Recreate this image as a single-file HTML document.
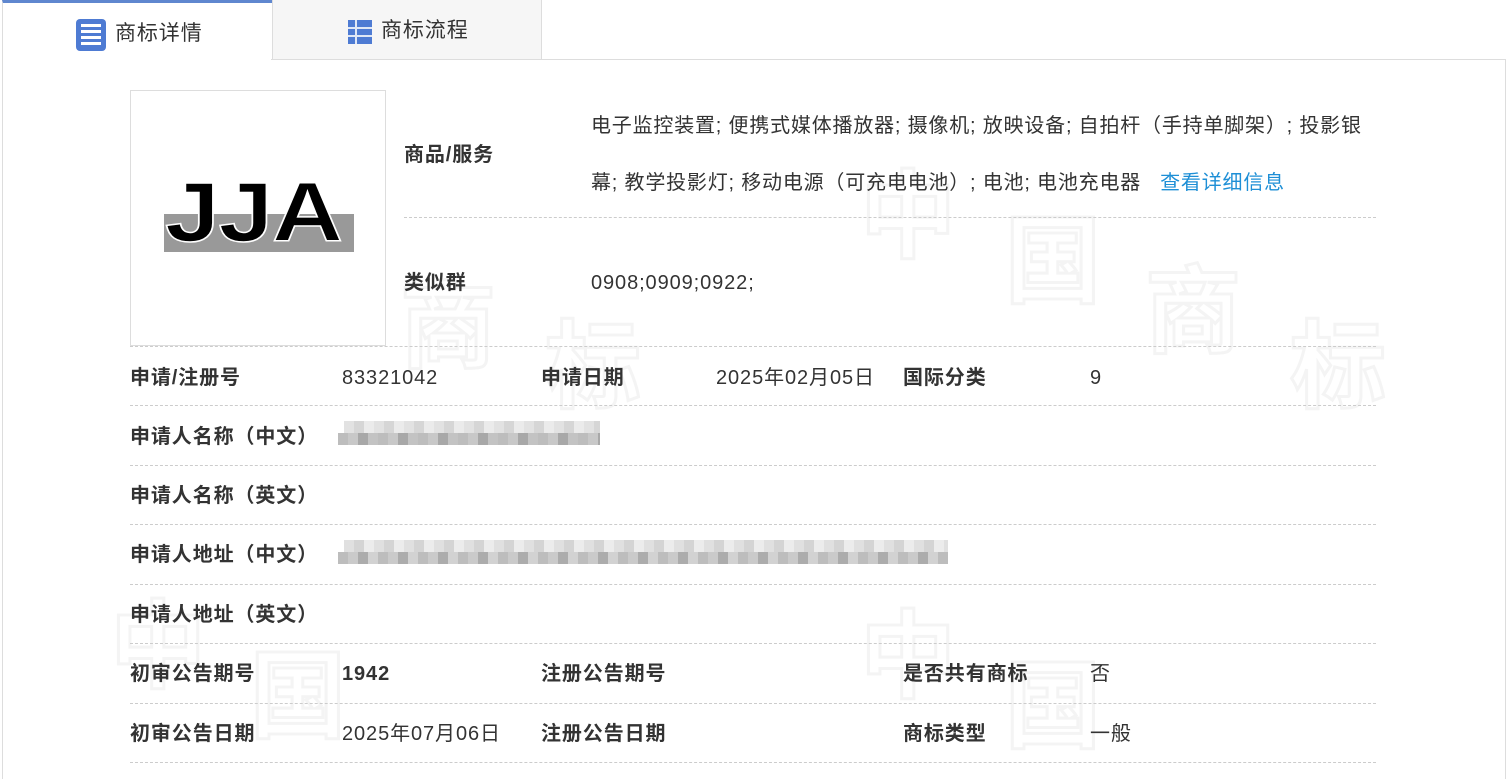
<!DOCTYPE html>
<html><head><meta charset="utf-8"><style>
*{margin:0;padding:0;box-sizing:border-box}
body{width:1510px;height:766px;background:#fff;font-family:"Liberation Sans","Noto Sans CJK SC",sans-serif;color:#333;position:relative;overflow:hidden}
.a{position:absolute;white-space:nowrap;font-size:20px;line-height:24px;letter-spacing:0.9px}
.b{font-weight:bold}
.hl{position:absolute;height:0;border-top:1px dashed #ccc}
.wm{position:absolute;font-size:96px;color:transparent;-webkit-text-stroke:3px #f4f4f4;font-weight:bold;line-height:1}
.blur{position:absolute;height:12px}
</style></head><body>
<div class="wm" style="left:860px;top:170px">中</div>
<div class="wm" style="left:1005px;top:215px">国</div>
<div class="wm" style="left:1145px;top:265px">商</div>
<div class="wm" style="left:1290px;top:320px">标</div>
<div class="wm" style="left:400px;top:280px">商</div>
<div class="wm" style="left:545px;top:320px">标</div>
<div class="wm" style="left:860px;top:610px">中</div>
<div class="wm" style="left:1005px;top:660px">国</div>
<div class="wm" style="left:110px;top:600px">中</div>
<div class="wm" style="left:250px;top:650px">国</div>

<div style="position:absolute;left:2px;top:0;width:270px;height:60px;background:#fff;border-top:3px solid #5f87cf;border-left:1px solid #ddd"></div>
<div style="position:absolute;left:272px;top:0;width:270px;height:59px;background:#f6f6f6;border-left:1px solid #ddd;border-right:1px solid #ddd"></div>
<div style="position:absolute;left:2px;top:59px;width:1504px;height:720px;border:1px solid #ddd;border-bottom:none"></div>
<div style="position:absolute;left:3px;top:58px;width:268px;height:3px;background:#fff"></div>
<svg style="position:absolute;left:76px;top:19px" width="30" height="32" viewBox="0 0 30 32"><rect x="0" y="0" width="30" height="32" rx="4" fill="#4e7bd3"/><rect x="5" y="5" width="20" height="3" fill="#fff"/><rect x="5" y="11" width="20" height="3" fill="#fff"/><rect x="5" y="17" width="20" height="3" fill="#fff"/><rect x="5" y="23" width="20" height="3" fill="#fff"/></svg>
<div class="a" style="left:115px;top:22px;font-size:21px">商标详情</div>
<svg style="position:absolute;left:348px;top:20px" width="24" height="24" viewBox="0 0 24 24"><rect width="24" height="24" fill="#4e7bd3"/><rect x="7" y="0" width="2" height="24" fill="#dfe7f6"/><rect x="0" y="7" width="24" height="2" fill="#dfe7f6"/><rect x="0" y="15" width="24" height="2" fill="#dfe7f6"/></svg>
<div class="a" style="left:381px;top:19px;font-size:21px">商标流程</div>

<div style="position:absolute;left:130px;top:90px;width:256px;height:256px;border:1px solid #ddd;background:#fff">
 <div style="position:absolute;left:33px;top:123px;width:190px;height:38px;background:#999"></div>
 <div style="position:absolute;left:34px;top:76px;width:300px;font-family:'Liberation Sans',sans-serif;font-weight:bold;font-size:84px;line-height:90px;color:#000;-webkit-text-stroke:1.5px #fff;letter-spacing:-1px;transform:scaleX(1.17);transform-origin:left">JJA</div>
</div>

<div class="a b" style="left:404px;top:143px">商品/服务</div>
<div class="a" style="left:591px;top:114px;letter-spacing:0.8px">电子监控装置; 便携式媒体播放器; 摄像机; 放映设备; 自拍杆（手持单脚架）; 投影银</div>
<div class="a" style="left:591px;top:171px;letter-spacing:0.8px">幕; 教学投影灯; 移动电源（可充电电池）; 电池; 电池充电器 &nbsp;&nbsp;<span style="color:#1e8fd6">查看详细信息</span></div>
<div class="hl" style="left:404px;top:217px;width:972px"></div>
<div class="a b" style="left:404px;top:271px">类似群</div>
<div class="a" style="left:591px;top:271px">0908;0909;0922;</div>

<div class="hl" style="left:130px;top:346px;width:1246px"></div>
<div class="hl" style="left:130px;top:405px;width:1246px"></div>
<div class="hl" style="left:130px;top:465px;width:1246px"></div>
<div class="hl" style="left:130px;top:524px;width:1246px"></div>
<div class="hl" style="left:130px;top:584px;width:1246px"></div>
<div class="hl" style="left:130px;top:643px;width:1246px"></div>
<div class="hl" style="left:130px;top:703px;width:1246px"></div>
<div class="hl" style="left:130px;top:762px;width:1246px"></div>

<div class="a b" style="left:130px;top:366px">申请/注册号</div>
<div class="a" style="left:342px;top:366px">83321042</div>
<div class="a b" style="left:541px;top:366px">申请日期</div>
<div class="a" style="left:716px;top:366px">2025年02月05日</div>
<div class="a b" style="left:903px;top:366px">国际分类</div>
<div class="a" style="left:1090px;top:366px">9</div>

<div class="a b" style="left:130px;top:425px">申请人名称（中文）</div>
<div class="blur" style="left:344px;top:421px;width:256px;background:repeating-linear-gradient(90deg,#e2e2e2 0 10px,#d6d6d6 10px 20px,#ebebeb 20px 30px)"></div>
<div class="blur" style="left:338px;top:433px;width:262px;background:repeating-linear-gradient(90deg,#bdbdbd 0 10px,#c8c8c8 10px 20px,#a8a8a8 20px 30px,#c3c3c3 30px 40px)"></div>
<div class="a b" style="left:130px;top:484px">申请人名称（英文）</div>
<div class="a b" style="left:130px;top:543px">申请人地址（中文）</div>
<div class="blur" style="left:344px;top:540px;width:604px;background:repeating-linear-gradient(90deg,#e0e0e0 0 10px,#d4d4d4 10px 20px,#ececec 20px 30px)"></div>
<div class="blur" style="left:338px;top:552px;width:610px;background:repeating-linear-gradient(90deg,#bdbdbd 0 10px,#cacaca 10px 20px,#acacac 20px 30px,#d2d2d2 30px 40px)"></div>
<div class="a b" style="left:130px;top:603px">申请人地址（英文）</div>

<div class="a b" style="left:130px;top:662px">初审公告期号</div>
<div class="a b" style="left:342px;top:662px">1942</div>
<div class="a b" style="left:541px;top:662px">注册公告期号</div>
<div class="a b" style="left:903px;top:662px">是否共有商标</div>
<div class="a" style="left:1090px;top:662px">否</div>

<div class="a b" style="left:130px;top:722px">初审公告日期</div>
<div class="a" style="left:342px;top:722px">2025年07月06日</div>
<div class="a b" style="left:541px;top:722px">注册公告日期</div>
<div class="a b" style="left:903px;top:722px">商标类型</div>
<div class="a" style="left:1090px;top:722px">一般</div>
</body></html>
